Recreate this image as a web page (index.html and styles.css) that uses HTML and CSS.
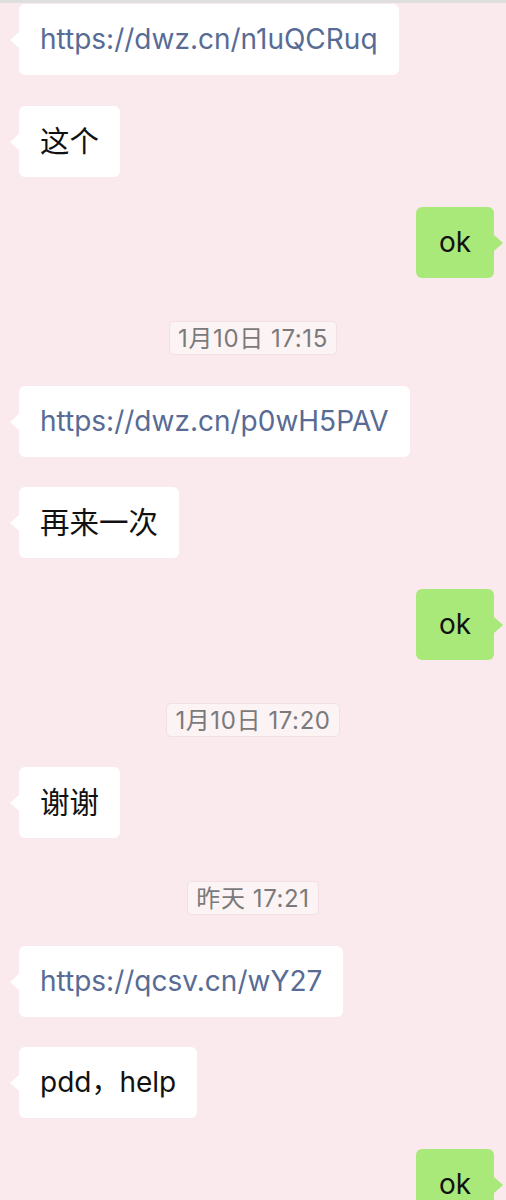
FILE: index.html
```html
<!DOCTYPE html>
<html lang="zh-CN">
<head>
<meta charset="utf-8">
<title>Chat</title>
<link rel="stylesheet" href="styles.css">
</head>
<body>
<div class="topbar"></div>
<main class="chat">
  <div class="row left"><div class="bubble link">https://dwz.cn/n1uQCRuq</div></div>
  <div class="row left"><div class="bubble zh">这个</div></div>
  <div class="row right"><div class="bubble me">ok</div></div>
  <div class="row time"><span class="stamp">1月10日 17:15</span></div>
  <div class="row left"><div class="bubble link">https://dwz.cn/p0wH5PAV</div></div>
  <div class="row left"><div class="bubble zh">再来一次</div></div>
  <div class="row right"><div class="bubble me">ok</div></div>
  <div class="row time"><span class="stamp">1月10日 17:20</span></div>
  <div class="row left"><div class="bubble zh">谢谢</div></div>
  <div class="row time"><span class="stamp">昨天 17:21</span></div>
  <div class="row left"><div class="bubble link">https://qcsv.cn/wY27</div></div>
  <div class="row left"><div class="bubble">pdd，help</div></div>
  <div class="row right"><div class="bubble me">ok</div></div>
</main>
</body>
</html>
```
FILE: styles.css
```css
html, body {
  margin: 0;
  padding: 0;
}
body {
  background: #fae9ed;
  font-family: "Inter", "Noto Sans CJK SC", sans-serif;
  width: 506px;
  height: 1200px;
  overflow: hidden;
}
.topbar {
  height: 3px;
  background: #dedede;
}
.chat {
  display: flex;
  flex-direction: column;
  gap: 30.5px;
  padding-top: 1px;
}
.row {
  display: flex;
}
.row.left {
  justify-content: flex-start;
  padding-left: 19px;
}
.row.right {
  justify-content: flex-end;
  padding-right: 12px;
}
.row.time {
  justify-content: center;
  margin-top: 12.5px;
}
.bubble {
  position: relative;
  background: #ffffff;
  color: #111111;
  font-size: 28px;
  line-height: 71px;
  height: 71px;
  padding: 0 21px;
  border-radius: 6px;
  box-sizing: border-box;
  white-space: nowrap;
}
.bubble.zh {
  font-size: 29.5px;
}
.bubble::before {
  content: "";
  position: absolute;
  top: 28px;
  width: 0;
  height: 0;
  border-top: 8px solid transparent;
  border-bottom: 8px solid transparent;
}
.bubble::before {
  left: -9px;
  border-right: 9px solid #ffffff;
}
.bubble.me {
  background: #a9e97a;
  min-width: 78px;
  text-align: center;
}
.bubble.me::before {
  left: auto;
  right: -9px;
  border-right: 0;
  border-left: 9px solid #a9e97a;
}
.bubble.link {
  color: #576b95;
}
.stamp {
  display: block;
  height: 34px;
  line-height: 33px;
  padding: 0 8px;
  font-size: 24px;
  letter-spacing: 0.6px;
  color: #7a7a7a;
  background: #fcf3f5;
  border: 1px solid #f3dfe4;
  border-radius: 5px;
  box-sizing: border-box;
}
```
